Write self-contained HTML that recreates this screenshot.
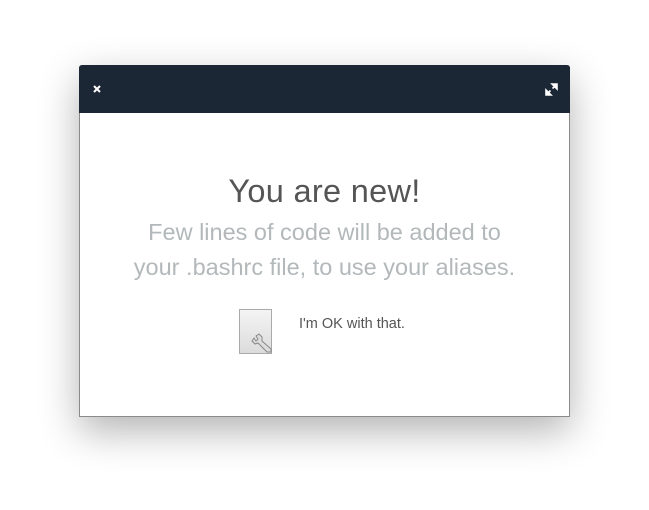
<!DOCTYPE html>
<html><head><style>
body{margin:0;width:649px;height:510px;background:#fff;font-family:"Liberation Sans",sans-serif;position:relative;overflow:hidden}
.win{position:absolute;left:79px;top:65px;width:491px;height:352px;background:#fff;border:1px solid #8a8a8a;border-top:none;box-sizing:border-box;box-shadow:0 14px 40px rgba(0,0,0,.3);border-radius:3px 3px 0 0}
.hd{position:absolute;left:-1px;right:-1px;top:0;height:48px;background:#1b2734;border-radius:3px 3px 0 0}
.t{position:absolute;left:0;right:0;text-align:center}
</style></head><body>
<div class="win">
<div class="hd">
<svg style="position:absolute;left:14px;top:20px" width="8" height="8"><path d="M1 1L7 7M7 1L1 7" stroke="#fff" stroke-width="2"/></svg>
<svg style="position:absolute;left:466px;top:18px" width="13" height="13"><path d="M7 1H12V6ZM1 7V12H6ZM11 2L7.5 5.5M2 11L5.5 7.5" fill="#fff" stroke="#fff" stroke-width="1.6"/></svg>
</div>
<div class="t" style="top:108px;font-size:32.5px;color:#555;letter-spacing:0.3px">You are new!</div>
<div class="t" style="top:150px;font-size:23.5px;color:#b3b8ba;line-height:35px;font-weight:300">Few lines of code will be added to<br>your .bashrc file, to use your aliases.</div>
<div style="position:absolute;left:159px;top:244px;width:33px;height:45px;background:linear-gradient(#f4f4f4,#dcdcdc);border:1px solid #aaa;box-sizing:border-box"></div>
<svg style="position:absolute;left:170px;top:266px" width="28" height="26"><path d="M4 7L2 10L5 13L8 12L17 21L21 21L21 18L12 10L12 6L9 3L6 5L8 8L6 10Z" fill="#ddd" stroke="#888" stroke-width="1"/></svg>
<div style="position:absolute;left:219px;top:251px;font-size:14.5px;color:#555">I'm OK with that.</div>
</div>
</body></html>
